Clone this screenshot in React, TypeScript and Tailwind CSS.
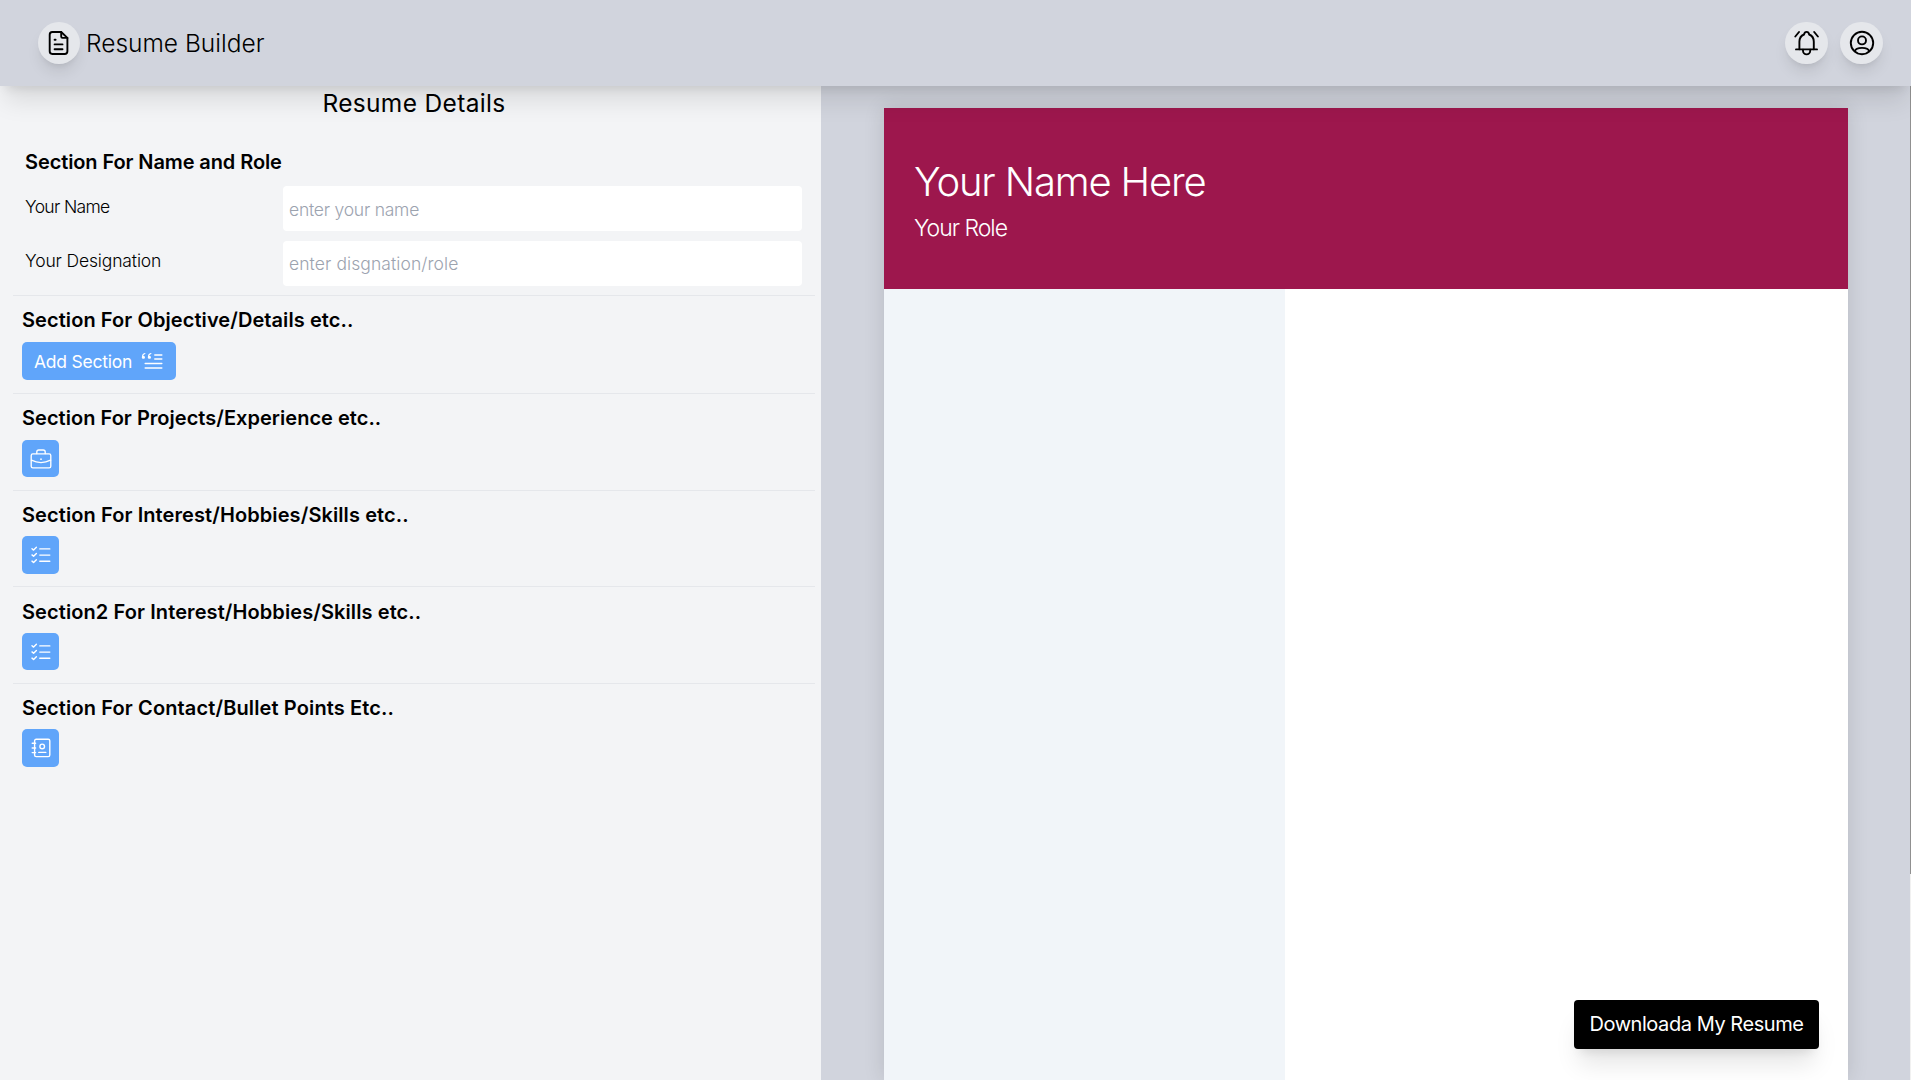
import type { ReactNode } from "react";

function DocumentIcon() {
  return (
    <svg width="24" height="26" viewBox="0 0 24 26" fill="none" stroke="black" strokeWidth="1.9" strokeLinecap="round" strokeLinejoin="round">
      <path d="M14.2 2H5.3A2.7 2.7 0 0 0 2.7 4.7v16.6A2.7 2.7 0 0 0 5.3 24h12.4a2.7 2.7 0 0 0 2.7-2.7V7.9z" />
      <path d="M14.2 2v4.6c0 .8.5 1.3 1.3 1.3h4.9" />
      <path d="M7.6 9.8h1M7.6 14.4h7.9M7.6 19.2h7.9" />
    </svg>
  );
}

function BellIcon() {
  return (
    <svg width="26" height="26" viewBox="0 0 26 26" fill="none" stroke="black" strokeWidth="1.9" strokeLinecap="round" strokeLinejoin="round">
      <path d="M2 19.4h21" />
      <path d="M5.4 19.2v-7.4c0-3.6 1.7-6.1 4.6-7.3.3-1.6 1.2-2.6 2.6-2.6s2.3 1 2.6 2.6c2.9 1.2 4.6 3.7 4.6 7.3v7.4" />
      <path d="M9 19.6v1.2a3.6 3.6 0 0 0 7.2 0v-1.2" />
      <path d="M1.3 6.5 5 2M20.2 2l3.7 4.5" />
    </svg>
  );
}

function AccountIcon() {
  return (
    <svg width="26" height="26" viewBox="0 0 26 26" fill="none" stroke="black" strokeWidth="1.9" strokeLinecap="round" strokeLinejoin="round">
      <circle cx="13" cy="13" r="11.2" />
      <circle cx="13" cy="10.4" r="4" />
      <path d="M5.8 21.4c.6-2.4 2.6-3.5 7.2-3.5s6.6 1.1 7.2 3.5" />
    </svg>
  );
}

function QuoteIcon() {
  return (
    <svg className="ml-[9px]" width="22" height="18" viewBox="0 0 22 18" fill="none" stroke="white" strokeWidth="1.5" strokeLinecap="round">
      <path d="M13.8 3.1h7M13.8 7h7M4.2 11.6h16.6M4.2 15.9h16.6" />
      <path d="M3.9 1.5C2.3 1.8 1.5 3 1.5 5M9.9 1.5C8.3 1.8 7.5 3 7.5 5" strokeWidth="1.2" />
      <path d="M2.2 5.4h.4M8.2 5.4h.4" strokeWidth="2.8" />
    </svg>
  );
}

function BriefcaseIcon() {
  return (
    <svg width="22" height="22" viewBox="0 0 22 22" fill="none" stroke="white" strokeWidth="1.35" strokeLinecap="round" strokeLinejoin="round">
      <rect x="1.2" y="5.9" width="19.6" height="14" rx="1.7" />
      <path d="M6.8 5.6V4a2 2 0 0 1 2-2h4.4a2 2 0 0 1 2 2v1.6" />
      <path d="M1.4 12.2c6 3 13.200 3 19.200 0" />
      <path d="M11 11.2h.01" strokeWidth="1.7" />
    </svg>
  );
}

function ChecklistIcon() {
  return (
    <svg width="20" height="18" viewBox="0 0 20 18" fill="none" stroke="white" strokeWidth="1.4" strokeLinecap="round" strokeLinejoin="round">
      <path d="m1 2.7 1.6 1.4L5.4 1.3M1 8.9l1.6 1.4 2.8-2.8M1 15.1l1.6 1.4 2.8-2.8" />
      <path d="M8.800 2.9h10M8.8 9.1h10M8.8 15.3h10" />
    </svg>
  );
}

function ContactsIcon() {
  return (
    <svg width="20" height="20" viewBox="0 0 20 20" fill="none" stroke="white" strokeWidth="1.4" strokeLinecap="round" strokeLinejoin="round">
      <rect x="3.6" y="1.2" width="15.2" height="17.4" rx="1.6" />
      <path d="M1.2 5.2h3.4M1.2 10h3.4M1.2 14.6h3.4" />
      <circle cx="11.2" cy="8.4" r="2.3" />
      <path d="M7.8 14.4h7" />
    </svg>
  );
}

function RoundButton({ children, label, className }: { children: ReactNode; label: string; className: string }) {
  return (
    <button aria-label={label} className={`flex h-[42px] shrink-0 items-center justify-center rounded-full bg-[#e5e7eb] shadow-lg ${className}`}>
      {children}
    </button>
  );
}

function Field({ label, placeholder, labelClass, inputClass }: { label: string; placeholder: string; labelClass: string; inputClass: string }) {
  return (
    <div className="flex h-[45px]">
      <label className={`w-[258px] shrink-0 text-[17.5px] leading-6 font-[350] ${labelClass}`}>{label}</label>
      <input
        placeholder={placeholder}
        className={`h-[45px] w-[519px] rounded bg-white px-1.5 text-[17.5px] font-[350] outline-none placeholder:text-[#9ca3af] ${inputClass}`}
      />
    </div>
  );
}

function Section({ title, className, buttonClass, children }: { title: string; className: string; buttonClass: string; children: ReactNode }) {
  return (
    <section className={`ml-[13px] w-[802px] border-t border-[#e5e7eb] pl-[9px] ${className}`}>
      <h3 className="text-xl leading-7 font-semibold whitespace-nowrap">{title}</h3>
      <button className={`flex items-center rounded-[5px] bg-[#60a5fa] text-white ${buttonClass}`}>{children}</button>
    </section>
  );
}

export default function App() {
  return (
    <div className="flex h-[1080px] flex-col overflow-hidden bg-[#d1d4dd] font-['Inter',sans-serif] text-black">
      <header className="relative z-10 flex h-[86px] shrink-0 items-center justify-between bg-[#d1d4dd] pr-[28px] pl-[38px] shadow-xl">
        <div className="flex items-center">
          <RoundButton label="Resume" className="w-[42px]"><DocumentIcon /></RoundButton>
          <span className="ml-[6px] text-[24.5px] leading-8 font-light">Resume Builder</span>
        </div>
        <div className="flex items-center gap-[12px]">
          <RoundButton label="Notifications" className="w-[43px]"><BellIcon /></RoundButton>
          <RoundButton label="Account" className="w-[43px]"><AccountIcon /></RoundButton>
        </div>
      </header>

      <div className="flex min-h-0 flex-1">
        <main className="w-[821px] shrink-0 bg-[#f3f4f6]">
          <h2 className="pt-px pl-[7px] text-center text-[24.5px] leading-8 tracking-[0.014em]">Resume Details</h2>
          <div className="h-[176px] pt-[29px] pl-[25px]">
            <h3 className="text-xl leading-7 font-semibold tracking-[-0.005em]">Section For Name and Role</h3>
            <div className="mt-[10px] flex flex-col gap-[10px]">
              <Field label="Your Name" placeholder="enter your name" labelClass="pt-[9px] tracking-[-0.038em]" inputClass="pt-[1px] tracking-[-0.013em]" />
              <Field label="Your Designation" placeholder="enter disgnation/role" labelClass="pt-[8px] tracking-[-0.008em]" inputClass="pb-[1px] tracking-[0.005em]" />
            </div>
          </div>
          <Section title="Section For Objective/Details etc.." className="h-[98px] pt-[10px] tracking-[0.005em]" buttonClass="mt-2 h-[38px] w-[154px] pl-[12px]">
            <span className="pt-[2px] text-[17.5px] tracking-[-0.013em]">Add Section</span>
            <QuoteIcon />
          </Section>
          <Section title="Section For Projects/Experience etc.." className="h-[97px] pt-[10px] tracking-[0.002em]" buttonClass="mt-2 size-[37px] justify-center">
            <BriefcaseIcon />
          </Section>
          <Section title="Section For Interest/Hobbies/Skills etc.." className="h-[96px] pt-[10px] tracking-[0.006em]" buttonClass="mt-[7px] h-[38px] w-[37px] justify-center">
            <ChecklistIcon />
          </Section>
          <Section title="Section2 For Interest/Hobbies/Skills etc.." className="h-[97px] pt-[11px] tracking-[0.006em]" buttonClass="mt-[7px] size-[37px] justify-center">
            <ChecklistIcon />
          </Section>
          <Section title="Section For Contact/Bullet Points Etc.." className="h-[97px] pt-[10px] tracking-[0.008em]" buttonClass="mt-[7px] h-[38px] w-[37px] justify-center">
            <ContactsIcon />
          </Section>
        </main>

        <aside className="flex flex-1 pt-[22px] pl-[63px]">
          <article className="flex w-[964px] flex-col bg-white shadow-[0_0_20px_rgba(0,0,0,0.12)]">
            <div className="h-[181px] shrink-0 bg-[#9d174d] pt-[50px] pl-[30px] text-white">
              <h1 className="text-[40px] leading-[48px] font-[330] tracking-[-0.029em]">Your Name Here</h1>
              <p className="mt-[6px] text-[23px] leading-8 font-[330] tracking-[-0.044em]">Your Role</p>
            </div>
            <div className="flex flex-1">
              <div className="w-[401px] bg-[#f1f5f9]" />
              <div className="flex flex-1 items-end justify-end pr-[29px] pb-[31px]">
                <button className="h-[49px] w-[245px] rounded bg-black pb-[2px] text-xl tracking-[-0.022em] whitespace-nowrap text-white shadow-xl">
                  Downloada My Resume
                </button>
              </div>
            </div>
          </article>
        </aside>
        <div className="w-px shrink-0 bg-[#f1f1f1]">
          <div className="h-[788px] bg-[#909090]" />
        </div>
      </div>
    </div>
  );
}
